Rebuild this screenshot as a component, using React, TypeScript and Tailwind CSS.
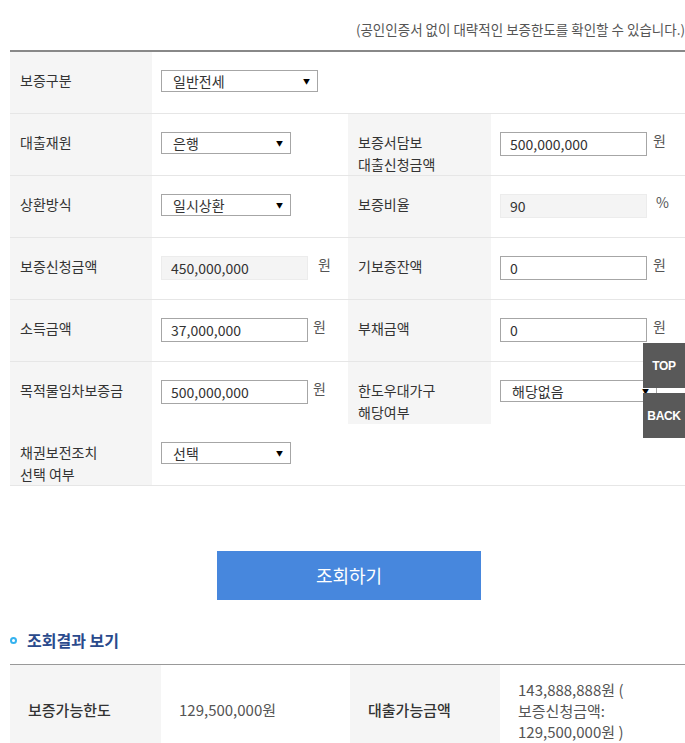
import type { ReactNode } from 'react'

function Label({ children, gray = true }: { children?: ReactNode; gray?: boolean }) {
  return (
    <div className={`${gray ? 'bg-[#f5f5f5]' : ''} pl-[10px] pt-[17px] text-[14px] leading-[22px] text-[#333]`}>
      {children}
    </div>
  )
}

function Cell({ children }: { children?: ReactNode }) {
  return <div className="flex items-start pl-[9px] pt-[18px]">{children}</div>
}

function FakeSelect({ value, width }: { value: string; width: string }) {
  return (
    <div className={`${width} flex h-[22px] items-center justify-between border border-[#a6a6a6] bg-white pl-[11px] pr-[7px] text-[14px] text-[#333]`}>
      <span className="leading-none">{value}</span>
      <span className="text-[7px] leading-none text-black">▼</span>
    </div>
  )
}

function Field({ value, readOnly = false, unit, gap = 'ml-[6px]' }: { value: string; readOnly?: boolean; unit?: string; gap?: string }) {
  return (
    <>
      <div
        className={`flex h-[24px] w-[147px] items-center pl-[9px] text-[14px] text-[#333] ${
          readOnly ? 'border border-[#ececec] bg-[#f4f4f4]' : 'border border-[#a6a6a6] bg-white'
        }`}
      >
        {value}
      </div>
      {unit && <span className={`${gap} -mt-[2px] text-[14px] leading-[20px] text-[#555]`}>{unit}</span>}
    </>
  )
}

const rowCols = 'grid h-[62px] grid-cols-[142px_196px_143px_1fr]'

export default function App() {
  return (
    <div className="relative h-[743px] w-[685px] overflow-hidden bg-white font-['Noto_Sans_CJK_KR','Noto_Sans',sans-serif] text-[#333]">
      <div className="ml-[10px] w-[675px]">
        <p className="h-[50px] whitespace-nowrap pt-[19px] text-right text-[13.5px] leading-[20px] text-[#555]">
          (공인인증서 없이 대략적인 보증한도를 확인할 수 있습니다.)
        </p>

        <div className="border-t-2 border-[#888]">
          <div className={`${rowCols} border-b border-[#e6e6e6]`}>
            <Label>보증구분</Label>
            <Cell>
              <FakeSelect value="일반전세" width="w-[157px]" />
            </Cell>
          </div>

          <div className={`${rowCols} border-b border-[#e6e6e6]`}>
            <Label>대출재원</Label>
            <Cell>
              <FakeSelect value="은행" width="w-[130px]" />
            </Cell>
            <Label>
              보증서담보
              <br />
              대출신청금액
            </Label>
            <Cell>
              <Field value="500,000,000" unit="원" />
            </Cell>
          </div>

          <div className={`${rowCols} border-b border-[#e6e6e6]`}>
            <Label>상환방식</Label>
            <Cell>
              <FakeSelect value="일시상환" width="w-[130px]" />
            </Cell>
            <Label>보증비율</Label>
            <Cell>
              <Field value="90" readOnly unit="%" gap="ml-[9px]" />
            </Cell>
          </div>

          <div className={`${rowCols} border-b border-[#e6e6e6]`}>
            <Label>보증신청금액</Label>
            <Cell>
              <Field value="450,000,000" readOnly unit="원" gap="ml-[10px]" />
            </Cell>
            <Label>기보증잔액</Label>
            <Cell>
              <Field value="0" unit="원" />
            </Cell>
          </div>

          <div className={`${rowCols} border-b border-[#e6e6e6]`}>
            <Label>소득금액</Label>
            <Cell>
              <Field value="37,000,000" unit="원" gap="ml-[5px]" />
            </Cell>
            <Label>부채금액</Label>
            <Cell>
              <Field value="0" unit="원" />
            </Cell>
          </div>

          <div className={rowCols}>
            <Label>목적물임차보증금</Label>
            <Cell>
              <Field value="500,000,000" unit="원" gap="ml-[5px]" />
            </Cell>
            <Label>
              한도우대가구
              <br />
              해당여부
            </Label>
            <Cell>
              <FakeSelect value="해당없음" width="w-[157px]" />
            </Cell>
          </div>

          <div className={`${rowCols} border-b border-[#e6e6e6]`}>
            <Label>
              채권보전조치
              <br />
              선택 여부
            </Label>
            <Cell>
              <FakeSelect value="선택" width="w-[130px]" />
            </Cell>
          </div>
        </div>

        <div className="mt-[65px] flex">
          <button className="ml-[207px] h-[49px] w-[264px] bg-[#4787dd] text-[18px] text-white">조회하기</button>
        </div>

        <div className="mt-[28px] flex h-[24px] items-center">
          <span className="h-[7px] w-[7px] rounded-full border-2 border-[#35b2ef]" />
          <h2 className="ml-[10px] text-[16px] font-bold leading-[24px] text-[#2a4a8c]">조회결과 보기</h2>
        </div>

        <div className="mt-[12px] grid h-[92px] grid-cols-[151px_189px_150px_1fr] border-t border-[#999]">
          <div className="flex items-center bg-[#f5f5f5] pl-[18px] text-[15px] font-medium text-[#333]">보증가능한도</div>
          <div className="flex items-center pl-[18px] text-[15px] text-[#555]">129,500,000원</div>
          <div className="flex items-center bg-[#f5f5f5] pl-[18px] text-[15px] font-medium text-[#333]">대출가능금액</div>
          <div className="flex items-center pl-[18px] text-[15px] leading-[21px] text-[#555]">
            <p>
              143,888,888원 (
              <br />
              보증신청금액:
              <br />
              129,500,000원 )
            </p>
          </div>
        </div>
      </div>

      <div className="absolute right-0 top-[343px] flex flex-col gap-[5px] font-['Liberation_Sans_Narrow','Liberation_Sans',sans-serif] text-[12px] font-bold tracking-[-0.3px] text-white">
        <div className="flex h-[45px] w-[42px] items-center justify-center bg-[#595959]">TOP</div>
        <div className="flex h-[45px] w-[42px] items-center justify-center bg-[#595959]">BACK</div>
      </div>
    </div>
  )
}
